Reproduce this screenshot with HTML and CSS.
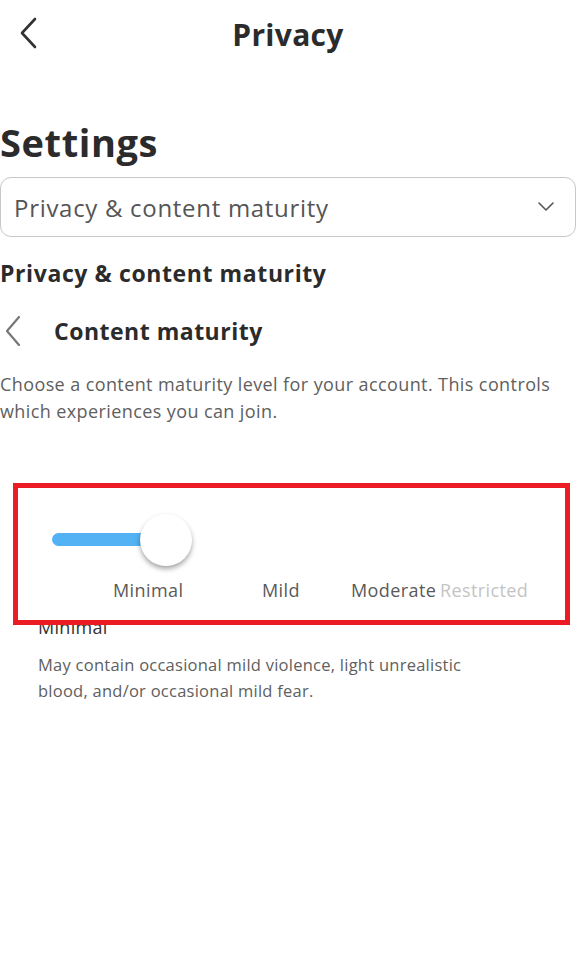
FILE: index.html
```html
<!DOCTYPE html>
<html lang="en">
<head>
<meta charset="utf-8">
<title>Privacy</title>
<link rel="stylesheet" href="styles.css">
</head>
<body>
<div class="page">
  <header class="topbar">
    <span class="back">
      <svg width="18" height="32" viewBox="0 0 18 32"><path d="M16 2 L3 16 L16 30" fill="none" stroke="#333" stroke-width="2.6" stroke-linecap="round" stroke-linejoin="round"/></svg>
    </span>
    <h1 class="title">Privacy</h1>
  </header>

  <h2 class="settings">Settings</h2>

  <div class="select">
    <span class="select-text">Privacy &amp; content maturity</span>
    <svg class="select-chev" width="18" height="12" viewBox="0 0 18 12"><path d="M2 2 L9 9 L16 2" fill="none" stroke="#555" stroke-width="1.6" stroke-linecap="round" stroke-linejoin="round"/></svg>
  </div>

  <h3 class="section">Privacy &amp; content maturity</h3>

  <div class="subhead">
    <svg class="sub-back" width="18" height="32" viewBox="0 0 18 32"><path d="M15 2 L3 16 L15 30" fill="none" stroke="#777" stroke-width="2.2" stroke-linecap="round" stroke-linejoin="round"/></svg>
    <span class="sub-title">Content maturity</span>
  </div>

  <p class="desc">Choose a content maturity level for your account. This controls which experiences you can join.</p>

  <div class="slider-area">
    <div class="slider">
      <div class="track"></div>
      <div class="thumb"></div>
    </div>
    <div class="labels">
      <span class="lbl lbl-min">Minimal</span>
      <span class="lbl lbl-mild">Mild</span>
      <span class="lbl lbl-mod">Moderate</span>
      <span class="lbl lbl-res">Restricted</span>
    </div>
    <div class="level">
      <div class="level-name">Minimal</div>
      <p class="level-desc">May contain occasional mild violence, light unrealistic blood, and/or occasional mild fear.</p>
    </div>
    <div class="highlight"></div>
  </div>
</div>
</body>
</html>
```

FILE: styles.css
```css
* { box-sizing: border-box; }
html, body { margin: 0; padding: 0; background: #fff; }
body {
  font-family: "Open Sans", "Noto Sans", sans-serif;
  color: #333;
  width: 576px;
  height: 975px;
  overflow: hidden;
}
.page { position: relative; }

.topbar {
  position: relative;
  height: 68px;
  display: flex;
  align-items: center;
  justify-content: center;
}
.back {
  position: absolute;
  left: 19px;
  top: 17px;
  display: flex;
}
.title {
  margin: 0;
  font-size: 30px;
  font-weight: 700;
  color: #2b2b2b;
  letter-spacing: 0.3px;
}

.settings {
  margin: 49px 0 0 0;
  font-size: 38px;
  font-weight: 700;
  line-height: 50px;
  letter-spacing: 0.6px;
  color: #2b2b2b;
}

.select {
  margin-top: 10px;
  height: 60px;
  border: 1px solid #c8c8c8;
  border-radius: 11px;
  display: flex;
  align-items: center;
  justify-content: space-between;
  padding: 0 20px 0 13px;
}
.select-text {
  font-size: 24px;
  letter-spacing: 0.7px;
  color: #555;
}

.section {
  margin: 19px 0 0 0;
  font-size: 23px;
  font-weight: 700;
  line-height: 34px;
  letter-spacing: 0.6px;
  color: #2b2b2b;
}

.subhead {
  margin-top: 21px;
  display: flex;
  align-items: center;
  height: 40px;
}
.sub-back { margin-left: 4px; }
.sub-title {
  margin-left: 32px;
  font-size: 23px;
  font-weight: 700;
  letter-spacing: 0.5px;
  color: #2b2b2b;
}

.desc {
  margin: 20px 0 0 0;
  font-size: 18px;
  line-height: 27px;
  letter-spacing: 0.4px;
  color: #606060;
}

.slider-area {
  position: relative;
  margin-top: 87px;
}
.slider {
  position: relative;
  height: 56px;
  margin-left: 52px;
  width: 480px;
}
.track {
  position: absolute;
  left: 0;
  top: 21px;
  width: 120px;
  height: 13px;
  border-radius: 7px;
  background: #52b2f3;
}
.thumb {
  position: absolute;
  left: 88px;
  top: 2px;
  width: 52px;
  height: 52px;
  border-radius: 50%;
  background: #fff;
  box-shadow: 0 3px 5px rgba(0,0,0,0.35);
}
.labels {
  position: relative;
  height: 28px;
  font-size: 18px;
  letter-spacing: 0.4px;
  color: #5a5a5a;
  margin-top: 10px;
}
.lbl { position: absolute; top: 0; }
.lbl-min { left: 113px; }
.lbl-mild { left: 262px; }
.lbl-mod { left: 351px; }
.lbl-res { left: 440px; color: #c4c4c4; }

.level { padding-left: 38px; margin-top: 8px; }
.level-name {
  font-size: 18px;
  line-height: 26px;
  letter-spacing: 0.3px;
  color: #333;
}
.level-desc {
  margin: 12px 0 0 0;
  width: 470px;
  font-size: 16.5px;
  line-height: 26px;
  letter-spacing: 0.25px;
  color: #606060;
}

.highlight {
  position: absolute;
  left: 13px;
  top: -29px;
  width: 557px;
  height: 142px;
  border: 5px solid #ec1c24;
}
```
